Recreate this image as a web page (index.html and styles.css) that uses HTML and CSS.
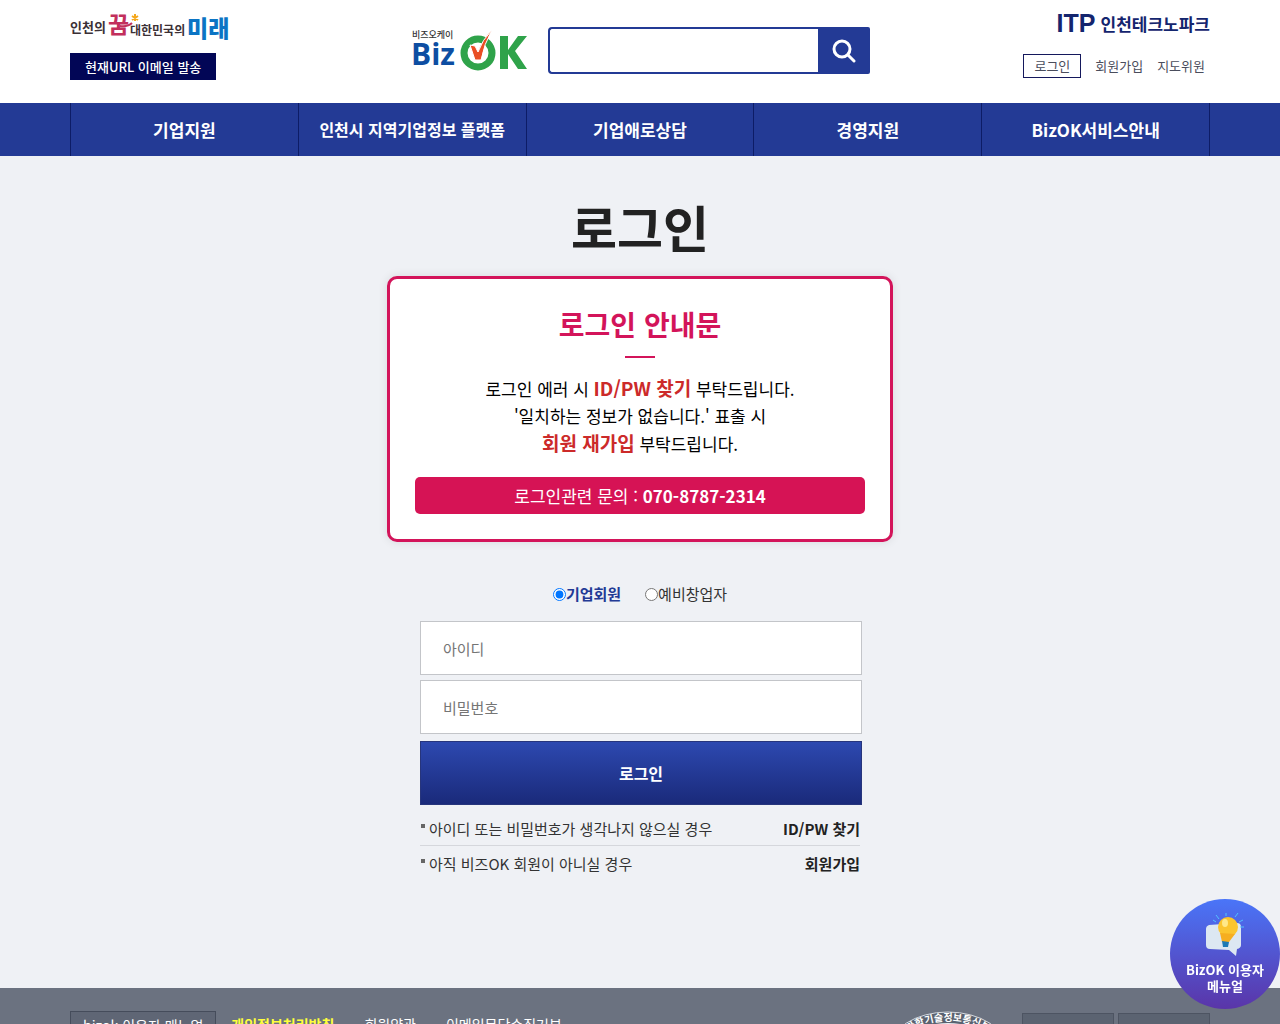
FILE: index.html
```
<!DOCTYPE html>
<html lang="ko">
<head>
    <meta charset="UTF-8">
    <meta name="viewport" content="width=device-width, initial-scale=1.0">
    <title>로그인 - BizOK</title>
    <link rel="stylesheet" href="styles.css">
</head>
<body>
    <header class="header">
        <div class="inner header-inner">
            <div class="header-left">
                <a href="#" class="slogan" aria-label="인천의 꿈 대한민국의 미래">
                    <svg width="164" height="34" viewBox="0 0 164 34">
                        <text x="0" y="20" class="slogan-dark" font-size="13">인천의</text>
                        <text x="38" y="21" class="slogan-pink" font-size="23">꿈</text>
                        <path d="M50 14 Q58 15 62 11" stroke="#c22f5c" stroke-width="2" fill="none"/>
                        <path d="M65 2v7M62 4l6 4M68 4l-6 4" stroke="#f5a81c" stroke-width="2"/>
                        <text x="60" y="23" class="slogan-dark" font-size="12">대한민국의</text>
                        <text x="117" y="25" class="slogan-blue">미래</text>
                    </svg>
                </a>
                <button type="button" class="url-btn">현재URL 이메일 발송</button>
            </div>

            <div class="header-center">
                <a href="#" class="logo" aria-label="비즈오케이 BizOK">
                    <svg width="116" height="46" viewBox="0 0 116 46">
                        <text x="0" y="11" class="logo-small">비즈오케이</text>
                        <text x="-1" y="38" class="logo-biz">Biz</text>
                        <circle cx="66" cy="26" r="14" fill="none" stroke="#2fa34a" stroke-width="7"/>
                        <path d="M58 18l5 1 3 6q4-12 14-22q-8 14-11 30h-6z" fill="#e94e24" stroke="#fff" stroke-width="1"/>
                        <path d="M88 9h8v14l10-14h9l-12 15 12 18h-9l-10-15v15h-8z" fill="#2fa34a"/>
                    </svg>
                </a>
                <form class="search">
                    <input type="text" class="search-input" aria-label="검색어">
                    <button type="submit" class="search-btn" aria-label="검색">
                        <svg width="24" height="24" viewBox="0 0 24 24" fill="none" stroke="#fff" stroke-width="3">
                            <circle cx="10" cy="10" r="8"/>
                            <path d="M16 16l6 6" stroke-linecap="round"/>
                        </svg>
                    </button>
                </form>
            </div>

            <div class="header-right">
                <a href="#" class="itp"><span class="itp-mark">ITP</span>인천테크노파크</a>
                <div class="util">
                    <a href="#" class="util-login">로그인</a>
                    <a href="#">회원가입</a>
                    <a href="#">지도위원</a>
                </div>
            </div>
        </div>
    </header>

    <nav class="gnb">
        <div class="inner gnb-list">
            <a href="#">기업지원</a>
            <a href="#" class="long">인천시 지역기업정보 플랫폼</a>
            <a href="#">기업애로상담</a>
            <a href="#">경영지원</a>
            <a href="#">BizOK서비스안내</a>
        </div>
    </nav>

    <main class="content">
        <h1>로그인</h1>

        <section class="notice">
            <h2>로그인 안내문</h2>
            <p>로그인 에러 시 <strong>ID/PW 찾기</strong> 부탁드립니다.<br>
            '일치하는 정보가 없습니다.' 표출 시<br>
            <strong>회원 재가입</strong> 부탁드립니다.</p>
            <div class="notice-tel">로그인관련 문의 : <b>070-8787-2314</b></div>
        </section>

        <form class="login-form">
            <div class="member-type">
                <label><input type="radio" name="member" checked><span>기업회원</span></label>
                <label><input type="radio" name="member"><span>예비창업자</span></label>
            </div>
            <input type="text" class="field" placeholder="아이디" aria-label="아이디">
            <input type="password" class="field" placeholder="비밀번호" aria-label="비밀번호">
            <button type="submit" class="login-btn">로그인</button>
            <ul class="login-help">
                <li><span>아이디 또는 비밀번호가 생각나지 않으실 경우</span><a href="#">ID/PW 찾기</a></li>
                <li><span>아직 비즈OK 회원이 아니실 경우</span><a href="#">회원가입</a></li>
            </ul>
        </form>
    </main>

    <footer class="footer">
        <div class="inner footer-inner">
            <div class="footer-links">
                <a href="#" class="manual">bizok 이용자 매뉴얼</a>
                <a href="#" class="privacy">개인정보처리방침</a>
                <a href="#">회원약관</a>
                <a href="#">이메일무단수집거부</a>
            </div>
            <div class="footer-right">
                <svg class="wa-mark" width="120" height="78" viewBox="0 0 120 78">
                    <ellipse cx="60" cy="39" rx="59" ry="38" fill="#5a6270" stroke="#d5d9df"/>
                    <ellipse cx="60" cy="39" rx="45" ry="27" fill="#e8ebef"/>
                    <path id="arc" d="M10 39a50 29 0 0 1 100 0" fill="none"/>
                    <text class="wa-text" text-anchor="middle"><textPath href="#arc" startOffset="50%">과학기술정보통신부</textPath></text>
                </svg>
                <div class="family"></div>
                <div class="family"></div>
            </div>
        </div>
    </footer>

    <a href="#" class="quick">
        <svg width="40" height="44" viewBox="0 0 40 44">
            <path d="M4 12l28-2q4 0 4 4v18q0 3-4 4l-1 7-7-6-19-1q-4 0-4-4v-16q0-3 3-4z" fill="#dce7f2"/>
            <path d="M14 6l-3-4M21 3V0M30 4l3-4M34 9l4-2M35 14h4M11 9l-3-2" stroke="#54c1ff" stroke-width="1"/>
            <circle cx="23" cy="14" r="10" fill="#fbc52f"/>
            <path d="M15 20l2 9h7l6-8z" fill="#f6ae20"/>
            <path d="M17 28l7 1-1 5h-5z" fill="#1c79b5"/>
            <ellipse cx="20" cy="10" rx="3" ry="4" fill="#ffe889"/>
        </svg>
        <span>BizOK 이용자<br>메뉴얼</span>
    </a>
</body>
</html>
```
FILE: styles.css
```
* {
    box-sizing: border-box;
}

body {
    margin: 0;
    height: 100vh;
    overflow: hidden;
    background-color: #eff1f5;
    color: #333;
    font-family: "Noto Sans CJK KR", "Noto Sans", sans-serif;
    font-size: 15px;
}

a {
    color: inherit;
    text-decoration: none;
}

button,
input {
    font-family: inherit;
}

.inner {
    max-width: 1140px;
    margin: 0 auto;
}

/* header */
.header {
    background-color: #fff;
}

.header-inner {
    display: grid;
    grid-template-columns: 1fr auto 1fr;
    height: 103px;
}

.header-left {
    padding-top: 12px;
}

.slogan {
    display: block;
    height: 41px;
}

.slogan-dark {
    fill: #3b3036;
    font-weight: 700;
}

.slogan-pink {
    fill: #c22f5c;
    font-weight: 700;
}

.slogan-blue {
    fill: #0b74c4;
    font-size: 23px;
    font-weight: 900;
}

.url-btn {
    height: 27px;
    padding: 0 15px;
    border: 0;
    background-color: #020656;
    color: #fff;
    font-size: 13px;
    font-weight: 500;
    line-height: 27px;
}

.header-center {
    display: flex;
    align-items: flex-start;
    gap: 20px;
    padding: 27px 0 0 2px;
}

.logo-small {
    fill: #333;
    font-size: 9px;
    font-weight: 500;
}

.logo-biz {
    fill: #0d4ea2;
    font-family: "Open Sans", sans-serif;
    font-size: 30px;
    font-weight: 700;
}

.search {
    display: flex;
    width: 322px;
    height: 47px;
}

.search-input {
    flex: 1;
    min-width: 0;
    border: 2px solid #233a95;
    border-right: 0;
    border-radius: 4px 0 0 4px;
    background-color: #fff;
}

.search-btn {
    display: flex;
    align-items: center;
    justify-content: center;
    width: 52px;
    padding: 0;
    border: 0;
    border-radius: 0 2px 2px 0;
    background-color: #233a95;
}

.header-right {
    display: flex;
    flex-direction: column;
    align-items: flex-end;
    padding-top: 8px;
}

.itp {
    display: flex;
    align-items: center;
    gap: 5px;
    height: 30px;
    color: #14256e;
    font-size: 17px;
    font-weight: 700;
}

.itp-mark {
    font-family: "Liberation Sans", sans-serif;
    font-size: 25px;
}

.util {
    display: flex;
    align-items: center;
    gap: 14px;
    margin-top: 16px;
    padding-right: 5px;
    color: #4a4d5c;
    font-size: 13px;
    line-height: 22px;
}

.util-login {
    padding: 0 10px;
    border: 1px solid #14185c;
}

/* main menu */
.gnb {
    background-color: #233a95;
}

.gnb-list {
    display: grid;
    grid-template-columns: repeat(5, 1fr);
    border-left: 1px solid #0d1c66;
}

.gnb-list a {
    border-right: 1px solid #0d1c66;
    color: #fff;
    font-size: 17px;
    font-weight: 700;
    line-height: 53px;
    text-align: center;
}

.gnb-list .long {
    font-size: 16px;
}

/* login */
.content {
    display: flex;
    flex-direction: column;
    align-items: center;
    padding: 36px 20px 108px;
}

h1 {
    margin: 0 0 16px;
    color: #222;
    font-size: 50px;
    font-weight: 700;
    line-height: 68px;
}

.notice {
    width: 100%;
    max-width: 506px;
    padding: 25px;
    border: 3px solid #d3145a;
    border-radius: 10px;
    background-color: #fff;
    box-shadow: 0 0 10px rgba(0, 0, 0, 0.1);
    color: #000;
    font-size: 17px;
    line-height: 27px;
    text-align: center;
}

.notice h2 {
    margin: 0;
    color: #d3145a;
    font-size: 28px;
    line-height: 40px;
}

.notice h2::after {
    content: "";
    display: block;
    width: 30px;
    height: 2px;
    margin: 12px auto 0;
    background-color: #d3145a;
}

.notice p {
    margin: 16px 0 20px;
}

.notice strong {
    color: #cc2a2a;
    font-size: 19px;
}

.notice-tel {
    border-radius: 5px;
    background-color: #d61355;
    color: #fff;
    line-height: 37px;
}

.login-form {
    width: 100%;
    max-width: 440px;
    margin-top: 40px;
}

.member-type {
    display: flex;
    justify-content: center;
    gap: 24px;
    margin-bottom: 15px;
    line-height: 24px;
}

.member-type label {
    display: flex;
    align-items: center;
}

.member-type input {
    width: 13px;
    height: 13px;
    margin: 0;
}

.member-type input:checked + span {
    color: #233a95;
    font-weight: 700;
}

.field,
.login-btn {
    display: block;
    width: calc(100% + 2px);
}

.field {
    height: 54px;
    margin-bottom: 5px;
    padding: 0 22px;
    border: 1px solid #c3c5c9;
    background-color: #fff;
    font-size: 15px;
}

.field::placeholder {
    color: #757575;
}

.login-btn {
    height: 64px;
    margin-top: 7px;
    border: 1px solid #27357c;
    background: linear-gradient(#2d49b0, #1a2a7a);
    color: #fff;
    font-size: 16px;
    font-weight: 700;
}

.login-help {
    margin: 6px 0 0;
    padding: 0;
    list-style: none;
}

.login-help li {
    display: flex;
    align-items: center;
    height: 34px;
}

.login-help li + li {
    height: 35px;
    border-top: 1px solid #d5d7dc;
}

.login-help li::before {
    content: "";
    width: 4px;
    height: 4px;
    margin: 0 4px 5px 1px;
    background-color: #666;
}

.login-help a {
    margin-left: auto;
    color: #222;
    font-weight: 700;
}

/* footer */
.footer {
    background-color: #6b7280;
    color: #fff;
}

.footer-inner {
    display: flex;
    justify-content: space-between;
    padding: 23px 0 30px;
}

.footer-links {
    display: flex;
    align-items: flex-start;
    font-size: 14px;
    line-height: 26px;
}

.footer-links a {
    margin-right: 30px;
}

.footer-links .manual {
    margin-right: 15px;
    padding: 0 12px;
    border: 1px solid #454c5b;
    background-color: #5f6675;
}

.footer-links .privacy {
    color: #ffff3c;
    font-weight: 700;
}

.footer-right {
    display: flex;
    align-items: flex-start;
    gap: 4px;
}

.wa-mark {
    margin-right: 10px;
}

.wa-text {
    fill: #fff;
    font-size: 10px;
    font-weight: 700;
}

.family {
    width: 92px;
    height: 40px;
    margin-top: 2px;
    border: 1px solid #4d5462;
    background-color: #5b6371;
}

/* floating manual button */
.quick {
    position: fixed;
    right: 0;
    bottom: 15px;
    display: flex;
    flex-direction: column;
    align-items: center;
    width: 110px;
    height: 110px;
    padding-top: 14px;
    border-radius: 50%;
    background: linear-gradient(#4a75f8, #5a35a8);
    color: #fff;
    font-size: 13px;
    font-weight: 700;
    line-height: 16px;
    text-align: center;
}

.quick span {
    margin-top: 5px;
}
```
